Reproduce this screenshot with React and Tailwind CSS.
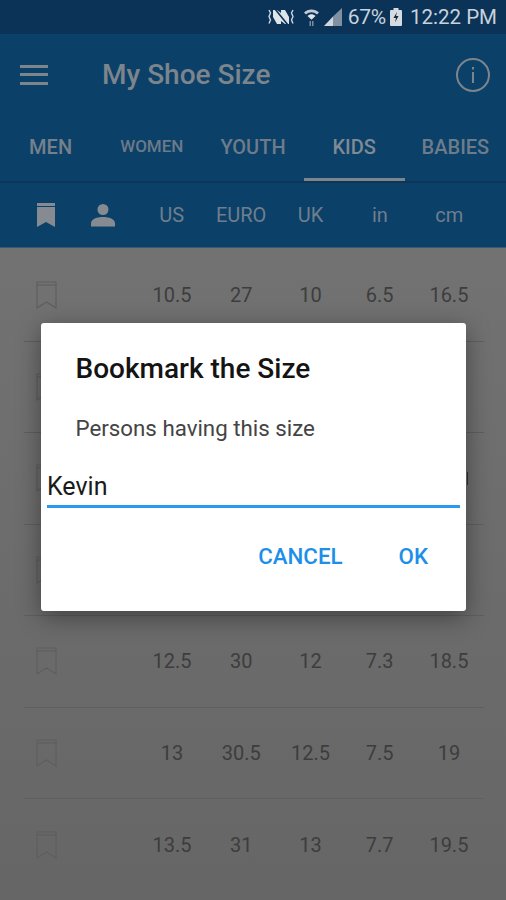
// Écran "My Shoe Size" : onglets, tableau des pointures, dialogue de favori ouvert.
const TABS = [
  { label: 'MEN', cls: 'text-[20px] text-[#75808a]' },
  { label: 'WOMEN', cls: 'text-[17px] text-[#6b7a88]' },
  { label: 'YOUTH', cls: 'text-[20px] text-[#6e7c89]' },
  { label: 'KIDS', cls: 'text-[20px] text-[#7f8a93]', active: true },
  { label: 'BABIES', cls: 'text-[20px] text-[#6e7c89]' },
];

const UNITS = ['US', 'EURO', 'UK', 'in', 'cm'];

// Les lignes 2 à 4 sont cachées par le dialogue : seul le signet dépasse.
const ROWS = [
  ['10.5', '27', '10', '6.5', '16.5'],
  [],
  [],
  [],
  ['12.5', '30', '12', '7.3', '18.5'],
  ['13', '30.5', '12.5', '7.5', '19'],
  ['13.5', '31', '13', '7.7', '19.5'],
];

function BookmarkOutline() {
  return (
    <svg width="21" height="28" viewBox="0 0 21 28" fill="none" stroke="#5e5e5e" strokeWidth="1.1" className="shrink-0">
      <path d="M1 1h19v26l-9.500-6-9.500 6z" />
      <path d="M1 4h19" />
    </svg>
  );
}

function StatusIcons() {
  return (
    <div className="flex items-center">
      {/* vibreur + muet */}
      <svg width="26" height="16" viewBox="0 0 26 16" className="mr-[9px]">
        <path d="M1 1l1.500 3-1.500 3.500 1.500 3.500-1.500 3.500M25 1l-1.500 3 1.500 3.500-1.500 3.500 1.500 3.500" fill="none" stroke="#cfd6de" strokeWidth="1.400" />
        <path d="M5 1h4l4 3V1h4l4 7v7h-4l-4-3v3H9l-4-7z" fill="#dfe4e9" />
        <path d="M7 0l13 16" stroke="#0b3257" strokeWidth="1.600" />
      </svg>
      {/* wifi */}
      <svg width="17" height="20" viewBox="0 0 17 20" className="mr-[4px]">
        <path d="M1 5.500C5 1.500 12 1.500 16 5.500l-2 2C10.500 4.500 6.500 4.500 3 7.500z" fill="#c2cad3" />
        <path d="M4.500 9c2.500-2.200 5.500-2.200 8 0l-4 3.800z" fill="#dfe4e9" />
        <path d="M6.500 14h1.500v5H6.500zM9 14h1.500v5H9z" fill="#7d8da0" />
      </svg>
      {/* réseau */}
      <svg width="18" height="18" viewBox="0 0 18 18" className="mr-[6px]">
        <path d="M18 0v18H9V8.500z" fill="#7f90a3" />
        <path d="M9 8.500V18H0z" fill="#cfd6de" />
      </svg>
      <span className="text-[21px] leading-none tracking-[-0.2px] text-[#c8d2dc]">67%</span>
      {/* batterie */}
      <svg width="12" height="18" viewBox="0 0 12 18" className="ml-[4px] mr-[8px]">
        <path d="M3.500 0h5v2H11a1 1 0 0 1 1 1v14a1 1 0 0 1-1 1H1a1 1 0 0 1-1-1V3a1 1 0 0 1 1-1h2.500z" fill="#d5dbe2" />
        <path d="M7 4L3.500 10H6l-1 4.500L8.500 8H6z" fill="#1a2530" />
      </svg>
      <span className="text-[20.500px] leading-none text-[#c8d2dc]">12:22 PM</span>
    </div>
  );
}

export default function App() {
  return (
    <div className="relative h-[900px] w-[506px] overflow-hidden bg-[#6a6a6a] font-['Roboto',sans-serif]">
      {/* Barre d'état */}
      <div className="flex h-[34px] items-center justify-end bg-[#0b3257] pr-[9px]">
        <StatusIcons />
      </div>

      {/* Barre d'application */}
      <div className="flex h-[82px] items-center bg-[#0b4069] pl-[20px] pr-[16px]">
        <div className="mb-[1px] flex w-[28px] flex-col gap-[5.500px]">
          <div className="h-[3px] bg-[#7d858c]" />
          <div className="h-[3px] bg-[#7d858c]" />
          <div className="h-[3px] bg-[#7d858c]" />
        </div>
        <div className="ml-[54px] flex-1 text-[28px] font-medium text-[#7d858c]">My Shoe Size</div>
        <div className="flex h-[34px] w-[34px] items-center justify-center rounded-full border-2 border-[#7d858c]">
          <svg width="4" height="16" viewBox="0 0 4 16" fill="#7d858c">
            <rect x="1" y="0" width="2" height="2.500" />
            <rect x="1" y="5" width="2" height="11" />
          </svg>
        </div>
      </div>

      {/* Onglets */}
      <div className="flex h-[67px] border-b-2 border-[#0c3559] bg-[#0b4069]">
        {TABS.map((tab) => (
          <div
            key={tab.label}
            className={`flex flex-1 items-center justify-center pb-[3px] font-medium ${tab.cls} ${
              tab.active ? 'relative' : ''
            }`}
          >
            {tab.label}
            {tab.active && <div className="absolute inset-x-0 bottom-0 h-[3px] bg-[#7d858c]" />}
          </div>
        ))}
      </div>

      {/* En-tête du tableau */}
      <div className="flex h-[65px] items-center border-b border-[#3b5878] bg-[#0b4069] pl-[37px] pr-[22px]">
        <svg width="18" height="24" viewBox="0 0 18 24" fill="#858b90">
          <path d="M0 0h18v3H0zM0 4h18v20l-9-5-9 5z" />
        </svg>
        <svg width="24" height="24" viewBox="0 0 24 24" fill="#858b90" className="ml-[36px]">
          <circle cx="12" cy="6.500" r="5.500" />
          <path d="M0 23.500v-3C0 16 6 14 12 14s12 2 12 6.500v3z" />
        </svg>
        <div className="ml-[22px] grid flex-1 grid-cols-5 text-center text-[20px] text-[#6f7e8c]">
          {UNITS.map((unit) => (
            <span key={unit}>{unit}</span>
          ))}
        </div>
      </div>

      {/* Lignes du tableau */}
      <div className="flex h-[652px] flex-col bg-gradient-to-b from-[#727272] to-[#666666] pl-[24px] pr-[22px] pt-[2px]">
        {ROWS.map((row, index) => (
          <div
            key={index}
            className="flex h-[91.500px] shrink-0 items-center border-b border-[#5f5f5f] pl-[12px] last:border-b-0"
          >
            <BookmarkOutline />
            <div className="ml-[80.500px] grid w-[346px] shrink-0 grid-cols-5 text-center text-[20px] text-[#3d3d3d]">
              {row.map((value, i) => (
                <span key={i}>{value}</span>
              ))}
            </div>
          </div>
        ))}
      </div>

      {/* Dialogue */}
      <div className="absolute left-[41px] top-[323px] flex h-[288px] w-[425px] flex-col rounded-[3px] bg-white px-[6px] shadow-[0_6px_24px_rgba(0,0,0,0.4)]">
        <div className="ml-[28.500px] mt-[26px] text-[28px] font-medium leading-[40px] text-[#141414]">
          Bookmark the Size
        </div>
        <div className="ml-[28.500px] mt-[25px] text-[22.300px] leading-[28px] text-[#444444]">
          Persons having this size
        </div>
        <div className="mt-[27px] h-[39px] border-b-[3px] border-[#2a9bec] text-[25px] leading-[36px] text-[#1a1a1a]">
          Kevin
        </div>
        <div className="mt-[28px] flex justify-end pr-[32px] text-[22.300px] font-medium leading-[40px] text-[#1e8fe8]">
          <span>CANCEL</span>
          <span className="ml-[56px]">OK</span>
        </div>
      </div>

      {/* Chiffre de la ligne 3 qui dépasse à droite du dialogue */}
      <div className="absolute left-[467px] top-[472px] h-[13px] w-[1px] bg-[#2a2a2a]" />
    </div>
  );
}
